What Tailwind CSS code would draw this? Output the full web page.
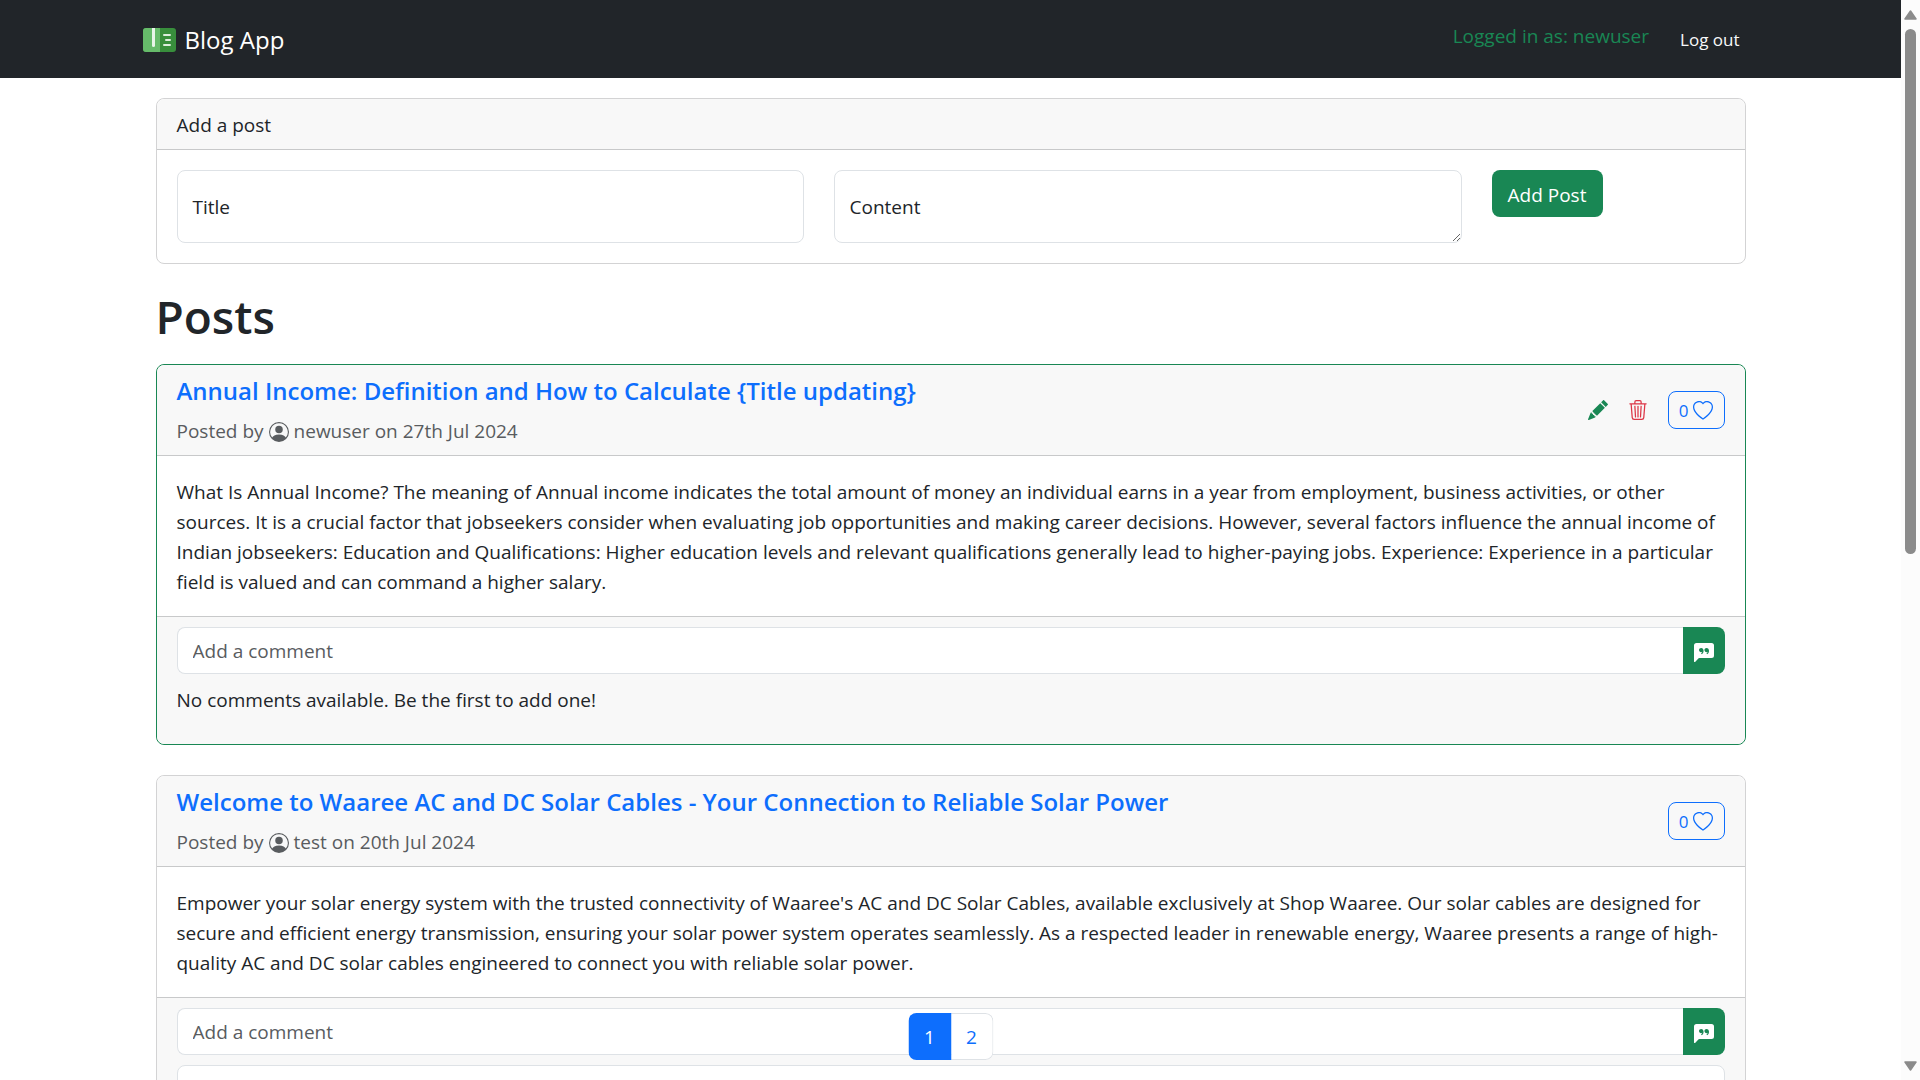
<!DOCTYPE html>
<html lang="en">
<head>
<meta charset="utf-8">
<meta name="viewport" content="width=device-width, initial-scale=1">
<title>Blog App</title>
<script src="https://cdn.jsdelivr.net/npm/@tailwindcss/browser@4"></script>
</head>
<body class="flex h-screen overflow-hidden bg-white font-['Segoe_UI','Open_Sans',sans-serif] text-[19px] leading-[30px] text-[#212529]">
<svg class="hidden" aria-hidden="true">
  <symbol id="person" viewBox="0 0 16 16"><path d="M11 6a3 3 0 1 1-6 0 3 3 0 0 1 6 0"/><path fill-rule="evenodd" d="M0 8a8 8 0 1 1 16 0A8 8 0 0 1 0 8m8-7a7 7 0 0 0-5.468 11.37C3.242 11.226 4.805 10 8 10s4.757 1.225 5.468 2.37A7 7 0 0 0 8 1"/></symbol>
  <symbol id="pencil" viewBox="0 0 16 16"><path d="M12.854.146a.5.5 0 0 0-.707 0L10.5 1.793 14.207 5.5l1.647-1.646a.5.5 0 0 0 0-.708zm.646 6.061L9.793 2.5 3.293 9H3.5a.5.5 0 0 1 .5.5v.5h.5a.5.5 0 0 1 .5.5v.5h.5a.5.5 0 0 1 .5.5v.5h.5a.5.5 0 0 1 .5.5v.207zm-7.468 7.468A.5.5 0 0 1 6 13.5V13h-.5a.5.5 0 0 1-.5-.5V12h-.5a.5.5 0 0 1-.5-.5V11h-.5a.5.5 0 0 1-.5-.5V10h-.5a.5.5 0 0 1-.175-.032l-.179.178a.5.5 0 0 0-.11.168l-2 5a.5.5 0 0 0 .65.65l5-2a.5.5 0 0 0 .168-.11z"/></symbol>
  <symbol id="trash" viewBox="0 0 16 16"><path d="M6.5 1h3a.5.5 0 0 1 .5.5v1H6v-1a.5.5 0 0 1 .5-.5M11 2.5v-1A1.5 1.5 0 0 0 9.5 0h-3A1.5 1.5 0 0 0 5 1.5v1H1.5a.5.5 0 0 0 0 1h.538l.853 10.66A2 2 0 0 0 4.885 16h6.23a2 2 0 0 0 1.994-1.84l.853-10.66h.538a.5.5 0 0 0 0-1zm1.958 1-.846 10.58a1 1 0 0 1-.997.92h-6.23a1 1 0 0 1-.997-.92L3.042 3.5zm-7.487 1a.5.5 0 0 1 .528.47l.5 8.5a.5.5 0 0 1-.998.06L5 5.03a.5.5 0 0 1 .47-.53Zm5.058 0a.5.5 0 0 1 .47.53l-.5 8.5a.5.5 0 1 1-.998-.06l.5-8.5a.5.5 0 0 1 .528-.47M8 4.5a.5.5 0 0 1 .5.5v8.5a.5.5 0 0 1-1 0V5a.5.5 0 0 1 .5-.5"/></symbol>
  <symbol id="heart" viewBox="0 0 16 16"><path d="m8 2.748-.717-.737C5.6.281 2.514.878 1.4 3.053c-.523 1.023-.641 2.5.314 4.385.92 1.815 2.834 3.989 6.286 6.357 3.452-2.368 5.365-4.542 6.286-6.357.955-1.886.838-3.362.314-4.385C13.486.878 10.4.28 8.717 2.01zM8 15C-7.333 4.868 3.279-3.04 7.824 1.143q.09.083.176.171a3 3 0 0 1 .176-.17C12.72-3.042 23.333 4.867 8 15"/></symbol>
  <symbol id="quote" viewBox="0 0 16 16"><path d="M0 2a2 2 0 0 1 2-2h12a2 2 0 0 1 2 2v8a2 2 0 0 1-2 2H4.414a1 1 0 0 0-.707.293L.854 15.146A.5.5 0 0 1 0 14.793zm7.194 2.766a1.7 1.7 0 0 0-.227-.272 1.5 1.5 0 0 0-.469-.324l-.008-.004A1.8 1.8 0 0 0 5.734 4C4.776 4 4 4.746 4 5.667c0 .92.776 1.666 1.734 1.666.343 0 .662-.095.931-.26-.137.389-.39.804-.81 1.22a.405.405 0 0 0 .011.59c.173.16.447.155.614-.01 1.334-1.329 1.37-2.758.941-3.706a2.5 2.5 0 0 0-.227-.4zM11 7.073c-.136.389-.39.804-.81 1.22a.405.405 0 0 0 .012.59c.172.16.446.155.613-.01 1.334-1.329 1.37-2.758.942-3.706a2.5 2.5 0 0 0-.228-.4 1.7 1.7 0 0 0-.227-.273 1.5 1.5 0 0 0-.469-.324l-.008-.004A1.8 1.8 0 0 0 10.07 4c-.957 0-1.734.746-1.734 1.667 0 .92.777 1.666 1.734 1.666.343 0 .662-.095.931-.26z"/></symbol>
</svg>

<div class="relative h-full min-w-0 flex-1 overflow-hidden">
  <header class="h-[78px] bg-[#212529]">
    <nav class="mx-auto flex h-full max-w-[1650px] items-center px-[17px] pt-[2px]">
      <a href="#" class="flex items-center gap-[9px] text-2xl text-white">
        <svg class="h-6 w-[33px]" viewBox="0 0 33 24" aria-hidden="true">
          <rect width="33" height="24" rx="3" fill="#388e3c"/>
          <path d="M3 0h14v24H3a3 3 0 0 1-3-3V3a3 3 0 0 1 3-3z" fill="#66bb6a"/>
          <path d="M9 0h3v17.500a1 1 0 0 1-3 0z" fill="#e8f5e9"/>
          <path d="M21 7h6M23 12h4M21 17h6" stroke="#dcedde" stroke-width="2" stroke-linecap="round"/>
        </svg>
        <span>Blog App</span>
      </a>
      <span class="ml-auto pb-2 text-[#198754]">Logged in as: newuser</span>
      <a href="#" class="mr-[19px] ml-[31px] text-[17px] text-[#f8f9fa]">Log out</a>
    </nav>
  </header>

  <main class="mx-auto max-w-[1650px] px-[30px] pt-5">
    <section class="rounded-lg border border-[#d3d3d4]">
      <h2 class="rounded-t-lg border-b border-[#c8c9ca] bg-[#f8f8f8] px-5 pt-[11px] pb-[9px]">Add a post</h2>
      <form class="flex items-start gap-[30px] p-5">
        <div class="relative h-[73px] w-[627px]">
          <input id="title" type="text" class="h-full w-full rounded-lg border border-[#dee2e6] px-4">
          <label for="title" class="absolute top-[22px] left-4">Title</label>
        </div>
        <div class="relative h-[73px] w-[628px]">
          <textarea id="content" class="block h-full w-full resize-y rounded-lg border border-[#dee2e6] px-4 pt-5"></textarea>
          <label for="content" class="absolute top-[22px] left-4">Content</label>
        </div>
        <button type="button" class="h-[47px] w-[111px] rounded-lg bg-[#198754] pt-[2px] whitespace-nowrap text-white">Add Post</button>
      </form>
    </section>

    <h1 class="mt-[22px] mb-[18px] text-[46px] leading-[60px] font-semibold">Posts</h1>

    <article class="mb-[30px] rounded-lg border border-[#198754]">
      <header class="flex items-center gap-5 rounded-t-lg border-b border-[#c8c9ca] bg-[#f8f8f8] px-5 py-[10px]">
        <div class="flex-1 pt-px">
          <h2 class="mb-[10px] text-2xl leading-[30px] font-semibold"><a href="#" class="text-[#0d6efd]">Annual Income: Definition and How to Calculate {Title updating}</a></h2>
          <p class="-mb-px flex items-center gap-[5px] text-[#595c5f]">Posted by <svg class="mt-[2px] size-5 fill-current" aria-hidden="true"><use href="#person"/></svg> newuser on 27th Jul 2024</p>
        </div>
        <button type="button" aria-label="Edit post" class="text-[#198754]"><svg class="size-5 fill-current"><use href="#pencil"/></svg></button>
        <button type="button" aria-label="Delete post" class="text-[#dc3545]"><svg class="size-5 fill-current"><use href="#trash"/></svg></button>
        <button type="button" aria-label="Like post, 0 likes" class="flex h-[38px] w-[57px] items-center justify-center gap-[5px] rounded-lg border border-[#0d6efd] pt-px text-[17px] text-[#0d6efd]">0<svg class="mt-px size-5 fill-current"><use href="#heart"/></svg></button>
      </header>
      <p class="px-5 pt-[21px] pb-[19px]">What Is Annual Income? The meaning of Annual income indicates the total amount of money an individual earns in a year from employment, business activities, or other sources. It is a crucial factor that jobseekers consider when evaluating job opportunities and making career decisions. However, several factors influence the annual income of Indian jobseekers: Education and Qualifications: Higher education levels and relevant qualifications generally lead to higher-paying jobs. Experience: Experience in a particular field is valued and can command a higher salary.</p>
      <footer class="rounded-b-lg border-t border-[#c8c9ca] bg-[#f8f8f8] px-5 pt-[10px] pb-[29px]">
        <form class="mb-[11px] flex h-[47px]">
          <input type="text" aria-label="Add a comment" placeholder="Add a comment" class="min-w-0 flex-1 rounded-l-lg border border-r-0 border-[#dee2e6] bg-white px-[15px] placeholder:text-[#595c5f]">
          <button type="button" aria-label="Send comment" class="flex w-[42px] items-center justify-center rounded-r-lg bg-[#198754] pt-1 text-white"><svg class="size-5 fill-current"><use href="#quote"/></svg></button>
        </form>
        <p>No comments available. Be the first to add one!</p>
      </footer>
    </article>

    <article class="mb-[30px] rounded-lg border border-[#d3d3d4]">
      <header class="flex items-center gap-5 rounded-t-lg border-b border-[#c8c9ca] bg-[#f8f8f8] px-5 py-[10px]">
        <div class="flex-1 pt-px">
          <h2 class="mb-[10px] text-2xl leading-[30px] font-semibold"><a href="#" class="text-[#0d6efd]">Welcome to Waaree AC and DC Solar Cables - Your Connection to Reliable Solar Power</a></h2>
          <p class="-mb-px flex items-center gap-[5px] text-[#595c5f]">Posted by <svg class="mt-[2px] size-5 fill-current" aria-hidden="true"><use href="#person"/></svg> test on 20th Jul 2024</p>
        </div>
        <button type="button" aria-label="Like post, 0 likes" class="flex h-[38px] w-[57px] items-center justify-center gap-[5px] rounded-lg border border-[#0d6efd] pt-px text-[17px] text-[#0d6efd]">0<svg class="mt-px size-5 fill-current"><use href="#heart"/></svg></button>
      </header>
      <p class="px-5 pt-[21px] pb-[19px]">Empower your solar energy system with the trusted connectivity of Waaree's AC and DC Solar Cables, available exclusively at Shop Waaree. Our solar cables are designed for secure and efficient energy transmission, ensuring your solar power system operates seamlessly. As a respected leader in renewable energy, Waaree presents a range of high-quality AC and DC solar cables engineered to connect you with reliable solar power.</p>
      <footer class="rounded-b-lg border-t border-[#c8c9ca] bg-[#f8f8f8] px-5 pt-[10px] pb-[29px]">
        <form class="mb-[10px] flex h-[47px]">
          <input type="text" aria-label="Add a comment" placeholder="Add a comment" class="min-w-0 flex-1 rounded-l-lg border border-r-0 border-[#dee2e6] bg-white px-[15px] placeholder:text-[#595c5f]">
          <button type="button" aria-label="Send comment" class="flex w-[42px] items-center justify-center rounded-r-lg bg-[#198754] pt-1 text-white"><svg class="size-5 fill-current"><use href="#quote"/></svg></button>
        </form>
        <div class="h-20 rounded-lg border border-[#dee2e6] bg-white"></div>
      </footer>
    </article>
  </main>

  <nav aria-label="Pages" class="absolute bottom-5 left-1/2 flex h-[47px] -translate-x-1/2 overflow-hidden rounded-lg">
    <a href="#" aria-current="page" class="flex w-[43px] items-center justify-center bg-[#0d6efd] text-white">1</a>
    <a href="#" class="flex w-[42px] items-center justify-center rounded-r-lg border border-l-0 border-[#dee2e6] bg-white text-[#0d6efd]">2</a>
  </nav>
</div>

<!-- scroll bar -->
<div class="flex h-full w-[19px] flex-col items-center bg-[#fcfcfc] pt-[10px] pb-[9px]" aria-hidden="true">
  <svg class="h-[10px] w-[13px]" viewBox="0 0 13 10"><path d="M6.500 1 12 9H1z" fill="#8b8b8b" stroke="#8b8b8b" stroke-width="1.500" stroke-linejoin="round"/></svg>
  <div class="mt-[9px] h-[525px] w-[11px] rounded-full bg-[#8b8b8b]"></div>
  <svg class="mt-auto h-[10px] w-[13px]" viewBox="0 0 13 10"><path d="M6.500 9 12 1H1z" fill="#8b8b8b" stroke="#8b8b8b" stroke-width="1.500" stroke-linejoin="round"/></svg>
</div>
</body>
</html>
